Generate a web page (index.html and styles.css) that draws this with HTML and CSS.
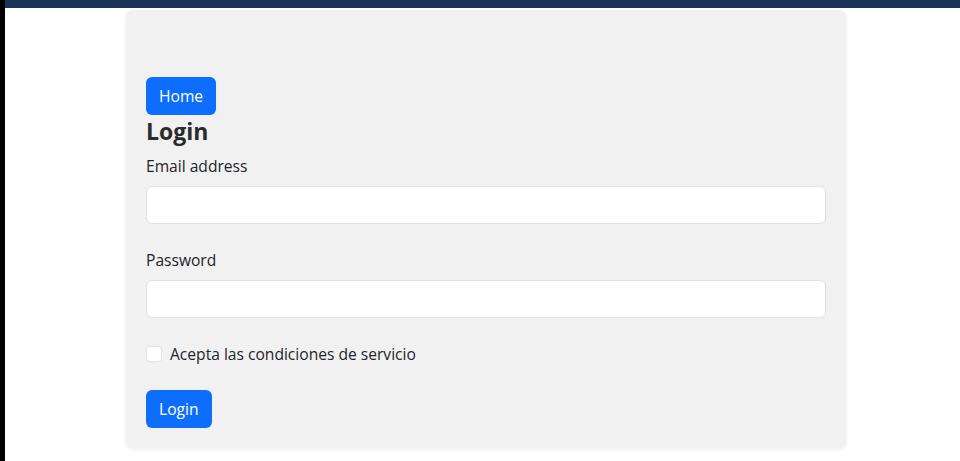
FILE: index.html
```html
<!DOCTYPE html>
<html lang="es">
<head>
<meta charset="utf-8">
<title>Login</title>
<link rel="stylesheet" href="styles.css">
</head>
<body>
<div class="rail"></div>
<div class="main">
  <div class="topbar"></div>
  <div class="card">
    <a class="btn" href="#">Home</a>
    <h3 class="title">Login</h3>
    <form class="form">
      <div class="field">
        <label class="label" for="email">Email address</label>
        <input class="input" id="email" type="email">
      </div>
      <div class="field">
        <label class="label" for="pass">Password</label>
        <input class="input" id="pass" type="password">
      </div>
      <div class="check">
        <input class="checkbox" id="terms" type="checkbox">
        <label for="terms">Acepta las condiciones de servicio</label>
      </div>
      <div><button class="btn" type="button">Login</button></div>
    </form>
  </div>
</div>
</body>
</html>
```

FILE: styles.css
```css
html, body {
  margin: 0;
  padding: 0;
  height: 100%;
}
body {
  display: flex;
  background: #fff;
  font-family: "Open Sans", "Noto Sans", sans-serif;
  font-size: 15.6px;
  line-height: 24px;
  color: #212529;
}
.rail {
  width: 5px;
  flex: none;
  background: #000;
}
.main {
  flex: 1;
  display: flex;
  flex-direction: column;
}
.topbar {
  height: 8px;
  background: #1b355a;
}
.card {
  width: 720px;
  box-sizing: border-box;
  margin: 2px 0 0 121px;
  padding: 67px 20px 19px;
  background: #f1f1f1;
  border-radius: 6px;
  box-shadow: 0 2px 4px rgba(0, 0, 0, 0.08);
}
.btn {
  display: inline-block;
  box-sizing: border-box;
  height: 38px;
  padding: 6px 13px;
  border: 0;
  border-radius: 6px;
  background: #0d6efd;
  color: #fff;
  font: inherit;
  line-height: 26px;
  text-decoration: none;
  cursor: pointer;
}
.title {
  margin: 0 0 7px;
  font-size: 23px;
  line-height: 32px;
  font-weight: 700;
  color: #2b2b2b;
}
.form {
  display: flex;
  flex-direction: column;
  gap: 24px;
}
.field {
  display: flex;
  flex-direction: column;
  gap: 8px;
}
.label {
  display: block;
}
.input {
  box-sizing: border-box;
  height: 38px;
  width: 100%;
  border: 1px solid #dee2e6;
  border-radius: 6px;
  background: #fff;
  font: inherit;
  padding: 6px 12px;
}
.check {
  display: flex;
  align-items: center;
  gap: 8px;
}
.checkbox {
  appearance: none;
  -webkit-appearance: none;
  margin: 0;
  width: 16px;
  height: 16px;
  border: 1px solid #dee2e6;
  border-radius: 4px;
  background: #fff;
}
```
